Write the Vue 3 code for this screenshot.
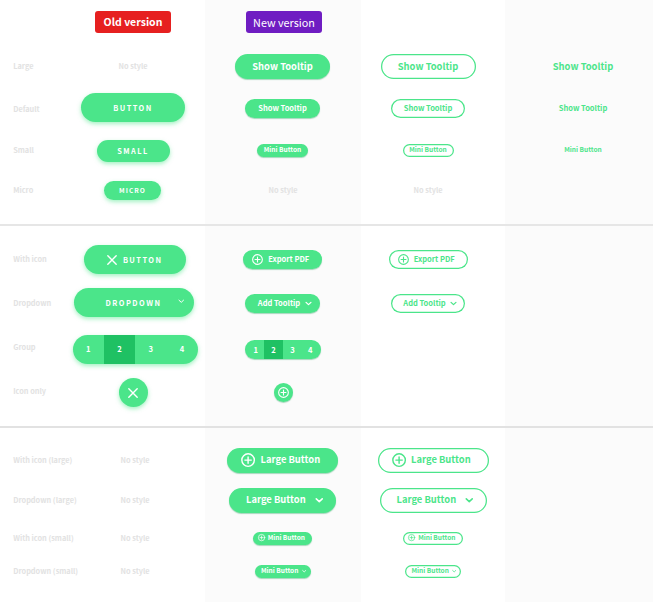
<script setup>
import { h } from 'vue'

const PlusIcon = () =>
  h('svg', { class: 'plus', viewBox: '0 0 12 12', fill: 'none', stroke: 'currentColor', 'stroke-linecap': 'round' }, [
    h('circle', { cx: 6, cy: 6, r: 5.3 }),
    h('path', { d: 'M6 3.3V8.7M3.3 6H8.7' }),
  ])
const ChevronIcon = () =>
  h('svg', { class: 'chevron', viewBox: '0 0 8 8', fill: 'none', stroke: 'currentColor', 'stroke-linecap': 'round', 'stroke-linejoin': 'round' }, [
    h('path', { d: 'M1.2 2.7L4 5.3L6.8 2.7' }),
  ])
const CrossIcon = () =>
  h('svg', { class: 'cross', viewBox: '0 0 10 10', fill: 'none', stroke: 'currentColor', 'stroke-linecap': 'round' }, [
    h('path', { d: 'M0.8 0.8L9.2 9.2M9.2 0.8L0.8 9.2' }),
  ])

const sizes = [
  { label: 'Large', key: 'large', text: 'Show Tooltip' },
  { label: 'Default', key: 'default', text: 'Show Tooltip', old: 'BUTTON' },
  { label: 'Small', key: 'mini', text: 'Mini Button', old: 'SMALL' },
]
const extras = [
  { label: 'With icon (large)', key: 'large', text: 'Large Button', icon: true },
  { label: 'Dropdown (large)', key: 'large', text: 'Large Button' },
  { label: 'With icon (small)', key: 'mini', text: 'Mini Button', icon: true },
  { label: 'Dropdown (small)', key: 'mini', text: 'Mini Button' },
]
</script>

<template>
  <main class="sheet">
    <header class="row head">
      <div class="cell old-col"><span class="tag red">Old version</span></div>
      <div class="cell"><span class="tag purple">New version</span></div>
    </header>

    <section class="sizes">
      <div v-for="s in sizes" :key="s.key" class="row" :class="'r-' + s.key">
        <div class="label">{{ s.label }}</div>
        <div class="cell">
          <button v-if="s.old" class="old" :class="'o-' + s.key"><span>{{ s.old }}</span></button>
          <span v-else class="none">No style</span>
        </div>
        <div class="cell"><button class="btn solid" :class="s.key"><span>{{ s.text }}</span></button></div>
        <div class="cell third"><button class="btn outline" :class="s.key"><span>{{ s.text }}</span></button></div>
        <div class="cell fourth"><button class="btn ghost" :class="s.key"><span>{{ s.text }}</span></button></div>
      </div>
      <div class="row r-micro">
        <div class="label">Micro</div>
        <div class="cell"><button class="old o-micro"><span>MICRO</span></button></div>
        <div class="cell"><span class="none">No style</span></div>
        <div class="cell third"><span class="none">No style</span></div>
      </div>
    </section>

    <section class="variants">
      <div class="row r-icon">
        <div class="label">With icon</div>
        <div class="cell wide"><button class="old o-icon"><CrossIcon /><span>BUTTON</span></button></div>
        <div class="cell"><button class="btn solid default with-icon"><PlusIcon /><span>Export PDF</span></button></div>
        <div class="cell third"><button class="btn outline default with-icon"><PlusIcon /><span>Export PDF</span></button></div>
      </div>
      <div class="row r-drop">
        <div class="label">Dropdown</div>
        <div class="cell"><button class="old o-drop"><span>DROPDOWN</span><ChevronIcon /></button></div>
        <div class="cell"><button class="btn solid default drop"><span>Add Tooltip</span><ChevronIcon /></button></div>
        <div class="cell third"><button class="btn outline default drop"><span>Add Tooltip</span><ChevronIcon /></button></div>
      </div>
      <div class="row r-group">
        <div class="label">Group</div>
        <div class="cell wide">
          <div class="group old-group"><button v-for="n in 4" :key="n" :class="{ active: n === 2 }">{{ n }}</button></div>
        </div>
        <div class="cell">
          <div class="group new-group"><button v-for="n in 4" :key="n" :class="{ active: n === 2 }">{{ n }}</button></div>
        </div>
      </div>
      <div class="row r-only">
        <div class="label">Icon only</div>
        <div class="cell"><button class="old o-only"><CrossIcon /></button></div>
        <div class="cell"><button class="btn solid default only"><PlusIcon /></button></div>
      </div>
    </section>

    <section class="extras">
      <div v-for="(e, i) in extras" :key="i" class="row" :class="'x-' + i">
        <div class="label">{{ e.label }}</div>
        <div class="cell wide"><span class="none">No style</span></div>
        <div v-for="kind in ['solid', 'outline']" :key="kind" class="cell">
          <button class="btn" :class="[kind, e.key, e.icon ? 'with-icon' : 'drop']">
            <PlusIcon v-if="e.icon" /><span>{{ e.text }}</span><ChevronIcon v-if="!e.icon" />
          </button>
        </div>
      </div>
    </section>
  </main>
</template>

<style>
body {
  margin: 0;
  background: #fff;
}
</style>

<style scoped>
.sheet {
  width: 653px;
  height: 602px;
  overflow: hidden;
  box-sizing: border-box;
  font-family: 'Noto Sans CJK SC', 'Noto Sans', sans-serif;
  background: linear-gradient(90deg, #fff 205px, #fbfbfb 205px 361px, #fff 361px 505px, #fbfbfb 505px);
}
.row {
  display: grid;
  grid-template-columns: 61px 144px 156px 144px 148px;
  align-items: center;
}
.cell {
  display: flex;
  justify-content: center;
  align-items: center;
}
.wide { padding-left: 4px; }
.third { padding-right: 10px; }
.fourth { padding-left: 8px; }
.head { height: 44px; }
.old-col { grid-column: 2; }
.tag {
  display: flex;
  align-items: center;
  justify-content: center;
  width: 76px;
  height: 22px;
  border-radius: 3px;
  color: #fff;
  line-height: 22px;
}
.red { background: #e62020; font-size: 10.5px; font-weight: 700; }
.purple { background: #6f1dc2; box-sizing: border-box; padding-bottom: 1px; font-size: 10.8px; margin-left: 2px; }

.sizes { height: 180px; border-bottom: 2px solid #e6e6e6; }
.variants { height: 186px; padding-top: 14px; border-bottom: 2px solid #e2e2e2; }
.extras { padding-top: 12px; }
.r-large { height: 45px; }
.r-default { height: 39px; }
.r-mini { height: 44px; }
.r-micro { height: 36px; }
.r-icon { height: 39px; }
.r-drop { height: 49px; }
.r-group { height: 43px; }
.r-only { height: 43px; }
.x-0, .x-1 { height: 40px; }
.x-2 { height: 36px; }
.x-3 { height: 30px; }

.label, .none {
  color: #e2e2e2;
  font-size: 7.35px;
  font-weight: 700;
  line-height: 12px;
  white-space: nowrap;
}
.label { padding-left: 13.2px; }
.r-large .label, .r-large .none, .r-icon .label, .r-drop .label, .x-1 .label, .x-1 .none, .x-3 .label, .x-3 .none { padding-bottom: 1px; }
.r-group .label { padding-bottom: 5px; }
.r-only .label { padding-bottom: 3px; }

button {
  display: flex;
  align-items: center;
  justify-content: center;
  box-sizing: border-box;
  margin: 0;
  padding: 0;
  border: 0;
  background: none;
  color: #fff;
  font-family: inherit;
  font-weight: 700;
  line-height: 1;
  white-space: nowrap;
}
svg { display: block; flex: none; overflow: visible; }
.plus { stroke-width: 1.2; }
.chevron { stroke-width: 1.45; }

.old {
  background: #4be58a;
  border-radius: 20px;
  font-size: 7.4px;
  letter-spacing: 1.45px;
  box-shadow: 0 2px 4px rgba(75, 229, 138, 0.5);
}
.o-default { width: 104.5px; height: 29px; margin-bottom: 2px; }
.o-mini { width: 73px; height: 22px; margin-top: 2px; }
.o-micro { width: 57px; height: 19px; margin-right: 1px; font-size: 6.6px; letter-spacing: 1.05px; }
.o-icon { width: 102px; height: 29px; justify-content: flex-start; padding-left: 23.3px; gap: 5.6px; }
.o-drop { position: relative; width: 120px; height: 29px; margin: 0 0 2px 1px; }
.o-drop .chevron { position: absolute; right: 9px; top: 10px; width: 6.5px; height: 6.5px; stroke-width: 1.2; }
.o-only { width: 29px; height: 29px; }
.cross { width: 10px; height: 10px; stroke-width: 1.4; }

.btn { border-radius: 14px; }
.btn.default span, .btn.mini span { padding-bottom: 1px; }
.solid { margin-right: 1px; background: #4be58a; box-shadow: 0 1px 1px rgba(60, 170, 110, 0.45); }
.outline { box-shadow: inset 0 0 0 1.25px #4be58a; background: #fff; color: #4be58a; }
.ghost { color: #4be58a; }
.large { width: 95px; height: 25px; font-size: 9.4px; }
.default { width: 74.5px; height: 19px; font-size: 7.53px; }
.mini { width: 51px; height: 13px; font-size: 6.56px; }
.with-icon, .drop { justify-content: flex-start; }
.default.with-icon { width: 79px; padding-left: 9px; gap: 5.2px; }
.default .plus { width: 11px; height: 11px; }
.default.drop { padding-left: 12.6px; }
.default .chevron { width: 7px; height: 7px; margin-left: 4.7px; }
.default.only { width: 19px; margin-right: 0; }
.large.with-icon { width: 111px; padding-left: 14.2px; gap: 5.2px; }
.large .plus { width: 14.2px; height: 14.2px; }
.large.drop { width: 107px; padding-left: 17px; }
.large .chevron { width: 8.5px; height: 8.5px; margin-left: 9px; }
.mini.with-icon { width: 59.5px; padding-left: 5px; gap: 2.7px; }
.mini .plus { width: 7.2px; height: 7.2px; }
.mini.drop { width: 56px; padding-left: 6.5px; }
.mini .chevron { width: 4.4px; height: 4.4px; margin-left: 3.3px; }

.group {
  display: flex;
  overflow: hidden;
  border-radius: 15px;
  background: #4be58a;
}
.group button { flex: 1; font-size: 7.6px; }
.group .active { background: #1fc163; }
.old-group { width: 125px; height: 29px; margin-bottom: 1px; box-shadow: 0 2px 4px rgba(75, 229, 138, 0.5); }
.new-group { width: 75.5px; height: 19px; box-shadow: 0 1px 1px rgba(60, 170, 110, 0.45); }
.new-group button:first-child { padding-left: 2px; }
.new-group button:nth-child(2), .new-group button:nth-child(3) { flex: 0 0 18.8px; }
.new-group button:last-child { padding-right: 2px; }
</style>
